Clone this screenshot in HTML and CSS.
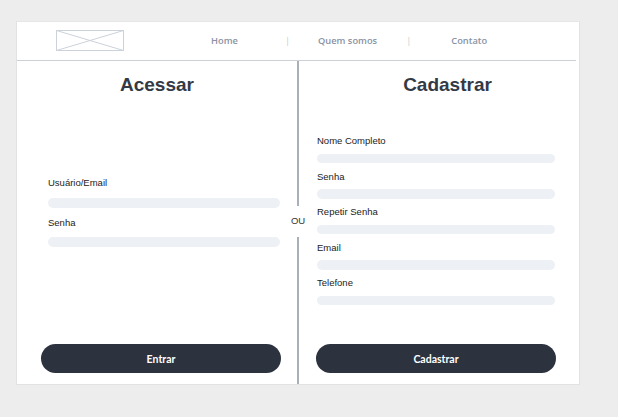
FILE: index.html
```html
<!DOCTYPE html>
<html lang="pt">
<head>
<meta charset="utf-8">
<title>Acessar / Cadastrar</title>
<link rel="stylesheet" href="styles.css">
</head>
<body>
<div class="card">
  <header class="header">
    <div class="logo">
      <svg width="68" height="21" viewBox="0 0 68 21">
        <rect x="0.5" y="0.5" width="67" height="20" fill="none" stroke="#ccd2da" stroke-width="1"/>
        <line x1="0.5" y1="0.5" x2="67.5" y2="20.5" stroke="#ccd2da" stroke-width="1"/>
        <line x1="67.5" y1="0.5" x2="0.5" y2="20.5" stroke="#ccd2da" stroke-width="1"/>
      </svg>
    </div>
    <nav class="nav">
      <a class="nav-link nav-home">Home</a>
      <span class="sep sep1">|</span>
      <a class="nav-link nav-quem">Quem somos</a>
      <span class="sep sep2">|</span>
      <a class="nav-link nav-contato">Contato</a>
    </nav>
  </header>
  <main class="main">
    <section class="panel panel-left">
      <h1 class="title title-left">Acessar</h1>
      <div class="fields fields-left">
        <div class="field">
          <label class="label">Usuário/Email</label>
          <div class="bar"></div>
        </div>
        <div class="field">
          <label class="label">Senha</label>
          <div class="bar"></div>
        </div>
      </div>
      <button class="btn btn-left">Entrar</button>
    </section>
    <div class="divider">
      <div class="line line-top"></div>
      <span class="ou">OU</span>
      <div class="line line-bottom"></div>
    </div>
    <section class="panel panel-right">
      <h1 class="title title-right">Cadastrar</h1>
      <div class="fields fields-right">
        <div class="field">
          <label class="label">Nome Completo</label>
          <div class="bar"></div>
        </div>
        <div class="field">
          <label class="label">Senha</label>
          <div class="bar"></div>
        </div>
        <div class="field">
          <label class="label">Repetir Senha</label>
          <div class="bar"></div>
        </div>
        <div class="field">
          <label class="label">Email</label>
          <div class="bar"></div>
        </div>
        <div class="field">
          <label class="label">Telefone</label>
          <div class="bar"></div>
        </div>
      </div>
      <button class="btn btn-right">Cadastrar</button>
    </section>
  </main>
</div>
</body>
</html>
```

FILE: styles.css
```css
* { box-sizing: border-box; }
html, body {
  margin: 0;
  padding: 0;
  background: #ededed;
  width: 618px;
  height: 417px;
  overflow: hidden;
}
body {
  padding: 21px 0 0 16px;
  font-family: "Liberation Sans", Arial, sans-serif;
}
.card {
  width: 564px;
  height: 364px;
  background: #ffffff;
  border: 1px solid #e2e2e2;
  border-top: 1px solid #e6e6e6;
  display: flex;
  flex-direction: column;
}
.header {
  height: 39px;
  margin-right: 3px;
  border-bottom: 1px solid #cdd1d6;
  display: flex;
  align-items: center;
  flex-shrink: 0;
}
.logo {
  margin-left: 39px;
  width: 68px;
  height: 21px;
  margin-top: -1px;
}
.logo svg { display: block; }
.nav {
  display: flex;
  align-items: center;
  font-family: "Open Sans", sans-serif;
  font-weight: 600;
  font-size: 9.3px;
  color: #8a93a3;
  margin-top: -2px;
}
.nav-link { white-space: nowrap; }
.nav-home { margin-left: 87px; }
.sep1 { margin-left: 47px; color: #c6cbd1; font-weight: 400; }
.nav-quem { margin-left: 28px; }
.sep2 { margin-left: 29px; color: #c6cbd1; font-weight: 400; }
.nav-contato { margin-left: 40px; }

.main {
  flex: 1;
  display: flex;
}
.panel {
  display: flex;
  flex-direction: column;
  padding-top: 12px;
  padding-bottom: 11px;
}
.panel-left {
  width: 280px;
  padding-left: 24px;
  padding-right: 16px;
}
.panel-right {
  width: 281px;
  padding-left: 18px;
  padding-right: 23px;
}
.title {
  margin: 0;
  font-family: "Liberation Sans", Arial, sans-serif;
  font-weight: 700;
  font-size: 19px;
  line-height: 24px;
  color: #333a46;
  text-align: center;
}
.title-left { padding-right: 8px; }
.title-right { padding-left: 22px; }
.fields {
  display: flex;
  flex-direction: column;
}
.fields-left {
  margin-top: 80px;
  padding-left: 7px;
  gap: 9px;
}
.fields-right {
  margin-top: 38px;
  gap: 7.5px;
}
.label {
  display: block;
  font-size: 9.5px;
  line-height: 12px;
  color: #222222;
  white-space: nowrap;
}
.bar {
  height: 10px;
  border-radius: 5px;
  background: #edf0f4;
}
.fields-left .label { margin-bottom: 8.5px; }
.fields-left .bar { width: 232px; }
.fields-right .label { margin-bottom: 6.5px; }
.fields-right .bar { width: 238px; height: 9.5px; }

.btn {
  margin-top: auto;
  height: 29px;
  border: none;
  border-radius: 15px;
  background: #2c333e;
  color: #ffffff;
  font-family: Lato, "Open Sans", sans-serif;
  font-weight: 700;
  font-size: 10.5px;
  padding: 0;
  cursor: pointer;
}
.btn-left { width: 240px; }
.btn-right { width: 240px; margin-left: -1px; }

.divider {
  width: 2px;
  display: flex;
  flex-direction: column;
  align-items: center;
}
.line {
  width: 2px;
  background: #a9b0b7;
}
.line-top { height: 145px; }
.line-bottom { flex: 1; }
.ou {
  height: 31px;
  line-height: 29px;
  font-size: 9.5px;
  color: #333333;
  background: #fff;
  padding: 0 1px;
  white-space: nowrap;
}
```
